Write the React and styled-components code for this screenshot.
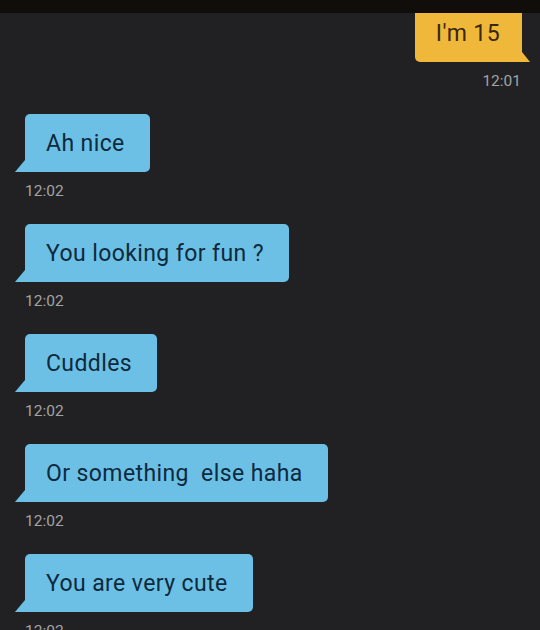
import React from "react";
import styled, { createGlobalStyle } from "styled-components";

const Global = createGlobalStyle`
  html, body { margin: 0; padding: 0; background: #212123; }
  body { width: 540px; height: 630px; overflow: hidden; font-family: Roboto, "Liberation Sans", sans-serif; }
`;

const Screen = styled.div`
  width: 540px;
  height: 630px;
  background: #212123;
  display: flex;
  flex-direction: column;
  overflow: hidden;
  position: relative;
`;

const TopBar = styled.div`
  height: 13px;
  background: #110d0a;
  flex: none;
  position: relative;
  z-index: 2;
`;

const List = styled.div`
  display: flex;
  flex-direction: column;
  margin-top: -9px;
`;

const Group = styled.div`
  display: flex;
  flex-direction: column;
  align-items: ${(p) => (p.$mine ? "flex-end" : "flex-start")};
  padding: ${(p) => (p.$mine ? "0 18px 0 0" : "0 0 0 25px")};
  margin-bottom: 23px;
`;

const Bubble = styled.div`
  position: relative;
  height: 58px;
  box-sizing: border-box;
  padding: ${(p) => (p.$mine ? "0 22px 0 21px" : "0 25px 0 21px")};
  display: flex;
  align-items: center;
  font-size: 23px;
  letter-spacing: 0.4px;
  white-space: pre;
  background: ${(p) => (p.$mine ? "#efb83a" : "#6cc0e5")};
  color: ${(p) => (p.$mine ? "#3b2708" : "#0e2a3c")};
  border-radius: ${(p) => (p.$mine ? "5px 5px 0 5px" : "5px 5px 5px 0")};

  &::after {
    content: "";
    position: absolute;
    bottom: 0;
    background: inherit;
    ${(p) =>
      p.$mine
        ? `right: -8px; width: 8px; height: 10px; clip-path: polygon(0 0, 100% 100%, 0 100%);`
        : `left: -10px; width: 10px; height: 12px; clip-path: polygon(100% 0, 100% 100%, 0 100%);`}
  }
`;

const Time = styled.div`
  margin-top: 9px;
  height: 20px;
  line-height: 20px;
  font-size: 15.5px;
  color: #a3a3a3;
  padding-right: ${(p) => (p.$mine ? "1px" : "0")};
`;

const messages = [
  { mine: true, text: "I'm 15", time: "12:01" },
  { mine: false, text: "Ah nice", time: "12:02" },
  { mine: false, text: "You looking for fun ?", time: "12:02" },
  { mine: false, text: "Cuddles", time: "12:02" },
  { mine: false, text: "Or something  else haha", time: "12:02" },
  { mine: false, text: "You are very cute", time: "12:02" },
];

export default function App() {
  return (
    <>
      <Global />
      <Screen>
        <TopBar />
        <List>
          {messages.map((m, i) => (
            <Group key={i} $mine={m.mine}>
              <Bubble $mine={m.mine}>{m.text}</Bubble>
              <Time $mine={m.mine}>{m.time}</Time>
            </Group>
          ))}
        </List>
      </Screen>
    </>
  );
}
